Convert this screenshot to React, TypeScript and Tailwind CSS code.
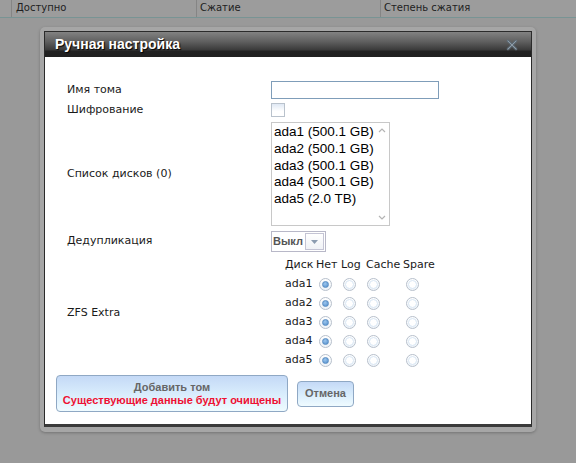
import React from 'react';

const disks = ['ada1', 'ada2', 'ada3', 'ada4', 'ada5'];
const sizes = ['500.1 GB', '500.1 GB', '500.1 GB', '500.1 GB', '2.0 TB'];

function Radio({ checked, className }: { checked?: boolean; className?: string }) {
	return (
		<span
			className={`flex h-[13px] w-[13px] items-center justify-center rounded-full border border-[#b7c0cc] bg-[linear-gradient(#ffffff,#eef3f8)] ${className ?? ''}`}
		>
			{checked ? (
				<span className="h-[7px] w-[7px] rounded-full border border-[#5a8ec4] bg-[radial-gradient(circle_at_40%_35%,#9cc6ee,#4f8cca)]" />
			) : (
				<span className="h-[9px] w-[9px] rounded-full border border-[#d8e6f4] bg-white" />
			)}
		</span>
	);
}

function Row({ label, height, children, className }: { label: string; height: number; children: React.ReactNode; className?: string }) {
	return (
		<div className={`flex items-center ${className ?? ''}`} style={{ height }}>
			<div className="w-[204px] shrink-0 text-[11px] text-[#1a1a1a]">{label}</div>
			<div className="flex h-full items-center">{children}</div>
		</div>
	);
}

function ZfsExtra() {
	const head = ['Диск', 'Нет', 'Log', 'Cache', 'Spare'];
	const cols = 'grid grid-cols-[31px_25px_25px_37px_40px] items-center';
	return (
		<div className="flex flex-col pl-[14px] text-[11px] text-[#1a1a1a]">
			<div className={`${cols} h-[19px]`}>
				{head.map((h) => (
					<span key={h}>{h}</span>
				))}
			</div>
			{disks.map((d) => (
				<div key={d} className={`${cols} h-[19px]`}>
					<span>{d}</span>
					<Radio checked className="ml-[3px]" />
					<Radio className="ml-[2px]" />
					<Radio className="ml-[1px]" />
					<Radio className="ml-[3px]" />
				</div>
			))}
		</div>
	);
}

function CloseIcon() {
	return (
		<svg width="12" height="12" viewBox="0 0 12 12">
			<path d="M2 2 L10 10 M10 2 L2 10" stroke="#5f6c76" strokeWidth="2.6" strokeLinecap="round" />
			<path d="M2 2 L10 10 M10 2 L2 10" stroke="#8e9ca8" strokeWidth="1" strokeLinecap="round" />
		</svg>
	);
}

export default function App() {
	return (
		<div className="relative h-[463px] w-[576px] overflow-hidden bg-[#999999] font-['DejaVu_Sans',sans-serif]">
			{/* grid header behind the dialog */}
			<div className="flex h-[18px] border-b border-[#789494] bg-[#9c9c9c] text-[10px] text-[#1e1e1e]">
				<div className="w-[12px] border-r border-[#858585]" />
				<div className="w-[185px] border-r border-[#858585] pl-[4px] leading-[16px]">Доступно</div>
				<div className="w-[184px] border-r border-[#858585] pl-[3px] leading-[16px]">Сжатие</div>
				<div className="flex-1 pl-[3px] leading-[16px]">Степень сжатия</div>
			</div>

			<div className="absolute left-[40px] top-[27px] h-[405px] w-[496px] rounded-[5px] bg-[#a6a6a6] px-[4px] pb-[5px] pt-[4px] shadow-[0_1px_3px_rgba(0,0,0,0.25)]">
				<div className="flex h-full flex-col border border-b-[3px] border-[#2b2b2b] border-b-[#3a3a3a] bg-white">
					<div className="flex h-[25px] items-center justify-between bg-[linear-gradient(#828282,#5e5e5e_40%,#3a3a3a_72%,#222222_76%,#202020)] pl-[10px] pr-[13px]">
						<span className="font-['Liberation_Sans',sans-serif] text-[14px] font-bold text-white [text-shadow:1px_1px_1px_#000]">
							Ручная настройка
						</span>
						<CloseIcon />
					</div>

					<div className="flex flex-1 flex-col pl-[22px] pt-[24px]">
						<Row label="Имя тома" height={18}>
							<input
								type="text"
								className="h-[18px] w-[168px] border border-[#7f9db9] bg-white outline-none"
							/>
						</Row>
						<Row label="Шифрование" height={14} className="mt-[4px]">
							<span className="block h-[14px] w-[14px] border border-[#b9c2cc] bg-[linear-gradient(#dfe8f4,#ffffff_60%)]" />
						</Row>
						<Row label="Список дисков (0)" height={104} className="mt-[5px]">
							<div className="flex h-[104px] w-[119px] border border-[#c8c8c8] bg-white">
								<div className="flex flex-1 flex-col pl-[2px] pt-[1px] font-['Liberation_Sans',sans-serif] text-[13.5px] leading-[16.8px] text-black">
									{disks.map((d, i) => (
										<span key={d} className="whitespace-nowrap">
											{d} ({sizes[i]})
										</span>
									))}
								</div>
								<div className="flex w-[14px] flex-col items-center justify-between py-[4px] text-[#b4b4b4]">
									<svg width="8" height="6" viewBox="0 0 8 6">
										<path d="M1 5 L4 2 L7 5" fill="none" stroke="currentColor" strokeWidth="1.2" />
									</svg>
									<svg width="8" height="6" viewBox="0 0 8 6">
										<path d="M1 1 L4 4 L7 1" fill="none" stroke="currentColor" strokeWidth="1.2" />
									</svg>
								</div>
							</div>
						</Row>
						<Row label="Дедупликация" height={21} className="mt-[5px]">
							<div className="flex h-[21px] w-[55px] items-center justify-between border border-[#b8b8c8] bg-white pl-[1px] pr-[1px]">
								<span className="font-['Liberation_Sans',sans-serif] text-[11px] font-bold text-[#555]">Выкл</span>
								<span className="flex h-[17px] w-[19px] items-center justify-center border border-[#c4c4d4] bg-[linear-gradient(#ffffff,#f0f2f6)]">
									<svg width="7" height="4" viewBox="0 0 7 4">
										<path d="M0 0 L7 0 L3.5 4 Z" fill="#8c9cb0" />
									</svg>
								</span>
							</div>
						</Row>
						<Row label="ZFS Extra" height={114} className="mt-[4px]">
							<ZfsExtra />
						</Row>

						<div className="ml-[-11px] mt-[5px] flex items-center gap-[9px] font-['Liberation_Sans',sans-serif] text-[11px] font-bold">
							<button className="flex h-[37px] w-[232px] flex-col items-center justify-center rounded-[4px] border border-[#8fa8c4] bg-[linear-gradient(#c4d9f6,#d8ecfc_50%,#effbff)] leading-[13px]">
								<span className="text-[#666]">Добавить том</span>
								<span className="text-[#ee1133]">Существующие данные будут очищены</span>
							</button>
							<button className="h-[26px] w-[57px] rounded-[4px] border border-[#8fa8c4] bg-[linear-gradient(#c4d9f6,#d8ecfc_50%,#effbff)] text-[#666]">
								Отмена
							</button>
						</div>
					</div>
				</div>
			</div>
		</div>
	);
}
